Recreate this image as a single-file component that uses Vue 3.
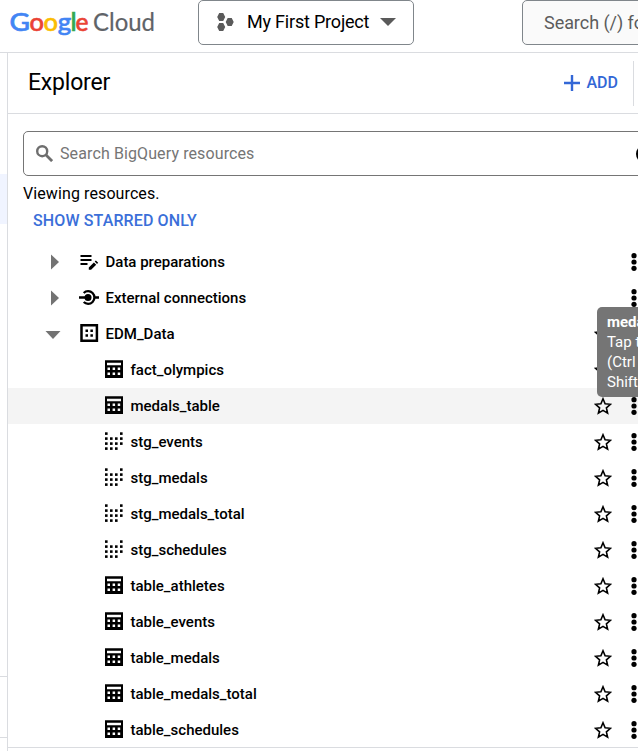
<script setup>
const rows = [
  { name: 'Data preparations', icon: 'prep', arrow: 'right' },
  { name: 'External connections', icon: 'conn', arrow: 'right' },
  { name: 'EDM_Data', icon: 'dataset', arrow: 'down', star: true },
  { name: 'fact_olympics', icon: 'table', star: true },
  { name: 'medals_table', icon: 'table', star: true, active: true },
  { name: 'stg_events', icon: 'view', star: true },
  { name: 'stg_medals', icon: 'view', star: true },
  { name: 'stg_medals_total', icon: 'view', star: true },
  { name: 'stg_schedules', icon: 'view', star: true },
  { name: 'table_athletes', icon: 'table', star: true },
  { name: 'table_events', icon: 'table', star: true },
  { name: 'table_medals', icon: 'table', star: true },
  { name: 'table_medals_total', icon: 'table', star: true },
  { name: 'table_schedules', icon: 'table', star: true },
]
const dots = [
  [0, 0], [15, 0],
  [0, 5], [5, 5], [10, 5], [15, 5],
  [0, 10], [5, 10], [10, 10], [15, 10],
  [0, 15], [5, 15], [10, 15],
]
</script>

<template>
  <div class="page">
    <header class="topbar">
      <svg class="logo" width="150" height="40" viewBox="0 0 150 40">
        <g class="brand">
          <text x="-0.500" y="30.500" fill="#4285f4" stroke="#4285f4" textLength="20.500" lengthAdjust="spacingAndGlyphs">G</text>
          <text x="19.500" y="30.500" fill="#ea4335" stroke="#ea4335" textLength="14.500" lengthAdjust="spacingAndGlyphs">o</text>
          <text x="33.500" y="30.500" fill="#fbbc04" stroke="#fbbc04" textLength="14.500" lengthAdjust="spacingAndGlyphs">o</text>
          <text x="47.800" y="30.500" fill="#4285f4" stroke="#4285f4" textLength="13.500" lengthAdjust="spacingAndGlyphs">g</text>
          <text x="60.500" y="30.500" fill="#34a853" stroke="#34a853">l</text>
          <text x="65.500" y="30.500" fill="#ea4335" stroke="#ea4335" textLength="13" lengthAdjust="spacingAndGlyphs">e</text>
        </g>
        <text class="cloud" x="83" y="30.500" fill="#5f6368" textLength="62" lengthAdjust="spacingAndGlyphs">Cloud</text>
      </svg>
      <div class="project">
        <svg width="17" height="18" viewBox="0 0 17 18" fill="#5a5a5a">
          <path d="M2.200 0h4l2 4-2 4h-4l-2-4zM2.200 10h4l2 4-2 4h-4l-2-4zM10.700 5h4l2 4-2 4h-4l-2-4z" />
        </svg>
        <span>My First Project</span>
        <svg class="caret" width="16" height="8" viewBox="0 0 16 8"><path d="M0 0h16L8 8z" fill="#5a5a5a" /></svg>
      </div>
      <div class="global-search">Search (/) for resources</div>
    </header>
    <div class="body">
      <aside class="rail">
        <div class="rail-active"></div>
        <div class="rail-mid"></div>
        <div class="rail-low"></div>
      </aside>
      <main class="explorer">
        <div class="heading">
          <h1>Explorer</h1>
          <div class="add">
            <svg width="16" height="16" viewBox="0 0 16 16"><path d="M8 0v16M0 8h16" stroke="#3367d6" stroke-width="2.400" /></svg>
            <span>ADD</span>
          </div>
          <div class="divider"></div>
        </div>
        <div class="search">
          <svg width="17" height="17" viewBox="0 0 17 17" fill="none" stroke="#6e6e6e">
            <circle cx="6.200" cy="6.200" r="5" stroke-width="2.400" /><path d="M9.800 9.800l6.300 6.300" stroke-width="2.800" />
          </svg>
          <span>Search BigQuery resources</span>
          <i class="help"></i>
        </div>
        <p class="viewing">Viewing resources.</p>
        <a class="starred">SHOW STARRED ONLY</a>
        <ul class="tree">
          <li v-for="r in rows" :key="r.name" :class="{ active: r.active, child: !r.arrow }">
            <span v-if="r.arrow" class="toggle">
              <svg v-if="r.arrow === 'right'" width="16" height="16" viewBox="0 0 16 16"><path d="M6 .5l8 7.500-8 7.500z" fill="#737373" /></svg>
              <svg v-else width="16" height="16" viewBox="0 0 16 16"><path d="M.5 5h15L8 13z" fill="#737373" /></svg>
            </span>
            <svg v-if="r.icon === 'prep'" class="icon" width="20" height="18" viewBox="0 0 20 18">
              <path d="M1.500 3h11M1.500 7h11M1.500 11h7" stroke="#000" stroke-width="2" />
              <path d="M9.800 16.800v-2.300l5.100-5.100 2.300 2.300-5.100 5.100zM15.700 8.600l1.200-1.200 2.300 2.300-1.200 1.200z" />
            </svg>
            <svg v-else-if="r.icon === 'conn'" class="icon" width="20" height="18" viewBox="0 0 20 18">
              <circle cx="9" cy="8.500" r="3.500" />
              <path d="M0 8.500h8M15.500 8.500H20M4.700 4a6.300 6.300 0 1 1 0 9" fill="none" stroke="#000" stroke-width="2.300" />
            </svg>
            <svg v-else-if="r.icon === 'dataset'" class="icon raised" width="20" height="18" viewBox="0 0 20 18">
              <path d="M2.500 1.300h15.400v15.400H2.500z" fill="none" stroke="#000" stroke-width="2.500" />
              <path d="M6.500 5.500H9V8H6.500zM11.400 5.500h2.500V8h-2.500zM6.500 10.200H9v2.500H6.500zM11.400 10.200h2.500v2.500h-2.500z" />
            </svg>
            <svg v-else-if="r.icon === 'table'" class="icon raised" width="18" height="18" viewBox="0 0 18 18">
              <path fill-rule="evenodd" d="M0 .3h18V18H0zM2 2.700v2.500h14V2.700zM2.500 7.500V10h2.500V7.500zM7.600 7.500V10h2.500V7.500zM12.700 7.500V10h2.500V7.500zM2.500 12.500V15h2.500v-2.500zM7.600 12.500V15h2.500v-2.500zM12.700 12.500V15h2.500v-2.500z" />
            </svg>
            <svg v-else class="icon raised" width="18" height="18" viewBox="0 0 18 18">
              <rect v-for="d in dots" :key="d.join()" :x="d[0]" :y="d[1] + 0.3" width="2.600" height="2.600" />
            </svg>
            <span class="name">{{ r.name }}</span>
            <svg v-if="r.star" class="star" width="18" height="18" viewBox="0 0 18 18">
              <path d="M9 1.800l2.100 5 5.400.5-4.100 3.600 1.200 5.300L9 13.400l-4.600 2.800 1.200-5.300-4.100-3.600 5.400-.5z" fill="none" stroke="#000" stroke-width="1.600" />
            </svg>
            <svg class="more" width="6" height="18" viewBox="0 0 6 18">
              <circle cx="3" cy="2.700" r="2.600" /><circle cx="3" cy="9" r="2.600" /><circle cx="3" cy="15.300" r="2.600" />
            </svg>
          </li>
        </ul>
      </main>
    </div>
    <div class="tooltip"><b>medals_table</b><br />Tap to open<br />(Ctrl + click)<br />Shift + click</div>
  </div>
</template>

<style>
body { overflow: hidden; }
</style>

<style scoped>
* { box-sizing: border-box; }
.page { position: relative; width: 638px; height: 751px; overflow: hidden; background: #fff; font-family: Roboto, sans-serif; color: #000; display: flex; flex-direction: column; white-space: nowrap; }
svg { display: block; flex: none; }
.topbar { height: 53px; flex: none; border-bottom: 1px solid #dadce0; display: flex; align-items: flex-start; }
.logo { margin-left: 10px; width: 150px; overflow: visible; }
.brand { font: 500 25.5px Lato, sans-serif; stroke-width: 0.6px; }
.cloud { font: 400 25px Lato, sans-serif; stroke: #5f6368; stroke-width: 0.2px; }
.project { margin-left: 38px; width: 216px; height: 45px; flex: none; border: 1px solid #80868b; border-radius: 5px; display: flex; align-items: center; padding: 0 17px 2px 18px; font-size: 18px; }
.project span { margin-left: 13px; letter-spacing: -0.2px; }
.caret { margin-left: auto; }
.global-search { margin-left: 108px; width: 220px; height: 45px; flex: none; border: 1px solid #80868b; border-radius: 5px; background: #fafafa; padding-left: 21px; font-size: 18px; line-height: 43px; letter-spacing: -0.05px; color: #5c5c5c; }
.body { flex: 1; display: flex; min-height: 0; }
.rail { width: 8px; flex: none; border-right: 1px solid #dadce0; padding-top: 121px; }
.rail-active { height: 50px; background: #f0f4ff; }
.rail-mid { height: 453px; border-bottom: 1px solid #dadce0; }
.rail-low { height: 61px; border-bottom: 1px solid #dadce0; }
.explorer { width: 630px; flex: none; overflow: hidden; }
.heading { height: 61px; border-bottom: 1px solid #dadce0; display: flex; align-items: center; padding-left: 20px; }
h1 { margin: 0; font-size: 23px; font-weight: 400; line-height: 28px; letter-spacing: -0.2px; }
.add { margin-left: auto; display: flex; align-items: center; gap: 7px; color: #3367d6; font-size: 16px; font-weight: 500; padding-bottom: 1px; }
.divider { width: 1px; height: 45px; background: #dadce0; margin: 0 4px 0 15px; }
.search { margin: 17px 0 0 15px; width: 660px; height: 45px; border: 1px solid #757575; border-radius: 5px; display: flex; align-items: center; padding-left: 12px; color: #757575; font-size: 16px; }
.search span { margin-left: 7px; width: 576px; letter-spacing: 0.11px; }
.help { width: 18px; height: 18px; border-radius: 50%; background: #000; flex: none; }
.viewing { margin: 8px 0 0 15px; font-size: 16px; line-height: 20px; letter-spacing: 0.1px; }
.starred { display: block; margin: 7px 0 0 25px; font-size: 16px; font-weight: 500; line-height: 20px; letter-spacing: 0.12px; color: #3b6fd9; }
.tree { list-style: none; margin: 13px 0 0; padding: 0; border-bottom: 1px solid #dadce0; height: 504px; }
li { height: 36px; display: flex; align-items: center; padding-left: 37px; font-size: 15px; font-weight: 500; }
li.child { padding-left: 97px; }
li.active { background: #f4f4f4; }
.toggle { width: 34px; }
.raised { margin-bottom: 2px; }
.name { margin-left: 6.5px; }
.child .name { margin-left: 7.5px; }
.star { margin-left: auto; }
.more { margin-left: auto; margin-right: 1px; }
.star + .more { margin-left: 19px; }
.tooltip { position: absolute; left: 597px; top: 307px; width: 150px; height: 90px; padding: 5px 10px; border-radius: 5px; background: #757575; color: #fff; font-size: 15px; line-height: 20px; }
</style>
